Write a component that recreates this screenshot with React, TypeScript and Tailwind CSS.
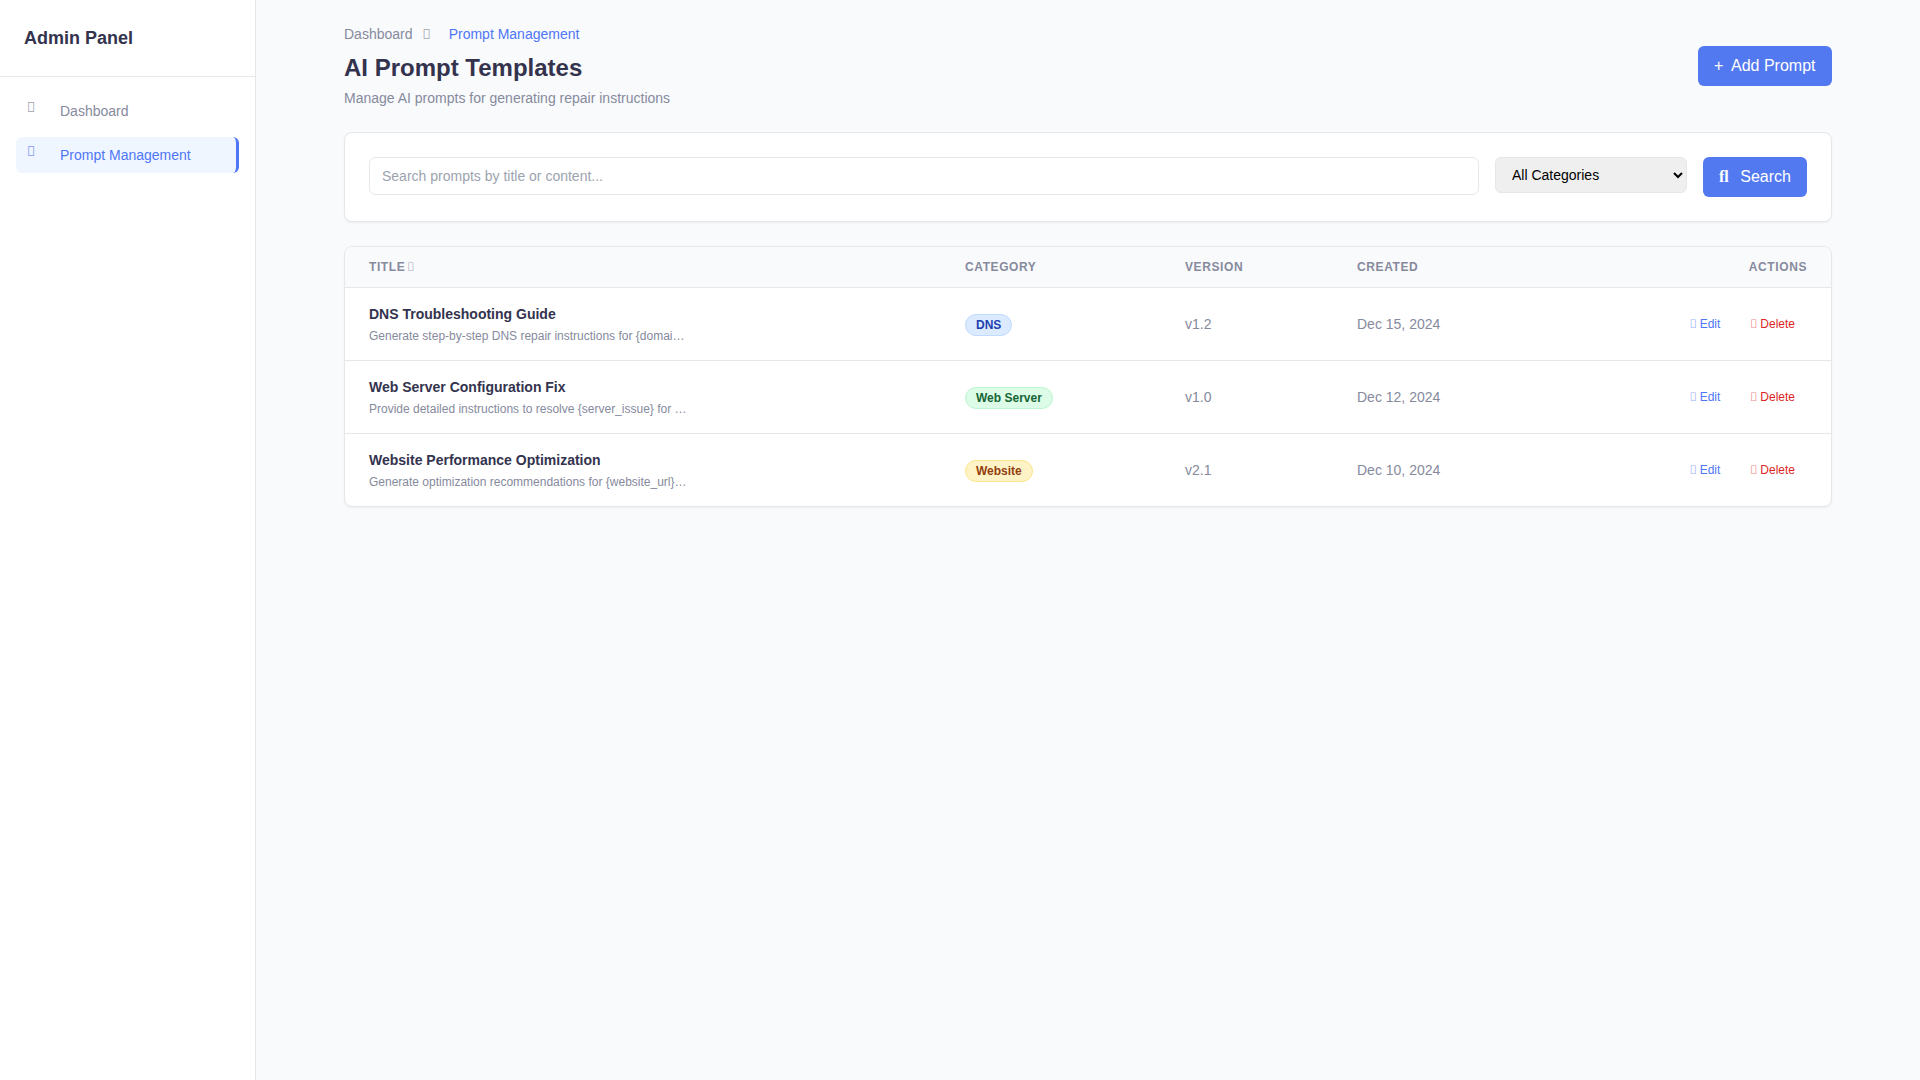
import React from "react";

function Icon({ c, className = "" }: { c: string; className?: string }) {
  return <i className={`font-sans font-black not-italic leading-none inline-block ${className}`}>{c}</i>;
}

const rows = [
  {
    title: "DNS Troubleshooting Guide",
    desc: "Generate step-by-step DNS repair instructions for {domain} with detailed verification steps",
    cat: "DNS",
    badge: "bg-[#dbeafe] border-[#bfdbfe] text-[#1e40af]",
    ver: "v1.2",
    date: "Dec 15, 2024",
  },
  {
    title: "Web Server Configuration Fix",
    desc: "Provide detailed instructions to resolve {server_issue} for {server_type} environments",
    cat: "Web Server",
    badge: "bg-[#dcfce7] border-[#bbf7d0] text-[#166534]",
    ver: "v1.0",
    date: "Dec 12, 2024",
  },
  {
    title: "Website Performance Optimization",
    desc: "Generate optimization recommendations for {website_url} based on performance metrics",
    cat: "Website",
    badge: "bg-[#fef3c7] border-[#fde68a] text-[#92400e]",
    ver: "v2.1",
    date: "Dec 10, 2024",
  },
];

export default function App() {
  return (
    <div className="flex min-h-screen bg-[#f9fafc] font-['Liberation_Sans',Arial,sans-serif] text-[#33334e]">
      <aside className="w-64 shrink-0 bg-white border-r border-[#e5e7eb]">
        <div className="p-6 border-b border-[#e5e7eb]">
          <h1 className="text-lg leading-7 font-bold">Admin Panel</h1>
        </div>
        <nav className="p-4 pr-0 flex flex-col gap-2 text-sm">
          <a className="flex w-[223px] px-3 py-2 rounded-md text-[#868a9d] border-r-[3px] border-transparent">
            <Icon c={"\uf015"} className="w-5 -ml-px -mt-px mr-[13px] text-[#9ca3af]" />
            Dashboard
          </a>
          <a className="flex w-[223px] px-3 py-2 rounded-md bg-[#eff6ff] text-[#4f76f6] border-r-[3px] border-[#4f76f6]">
            <Icon c={"\uf544"} className="w-5 -ml-px -mt-px mr-[13px] text-[#7f9bf7]" />
            Prompt Management
          </a>
        </nav>
      </aside>
      <main className="flex-1 px-[88px] py-6">
        <div className="flex items-center justify-between mb-6">
          <div>
            <div className="flex items-center text-sm text-[#868a9d] mb-2">
              <span>Dashboard</span>
              <Icon c={"\uf054"} className="ml-2.5 mr-[18px] text-[#a3a7b5]" />
              <span className="text-[#4f76f6]">Prompt Management</span>
            </div>
            <h2 className="text-2xl font-bold mb-1">AI Prompt Templates</h2>
            <p className="text-sm text-[#868a9d]">Manage AI prompts for generating repair instructions</p>
          </div>
          <button className="w-[134px] h-10 px-4 rounded-md bg-[#5379f0] text-white text-base flex items-center">
            <span className="mr-2 w-[9px] text-center">+</span>
            Add Prompt
          </button>
        </div>

        <div className="bg-white border border-[#e5e7eb] rounded-lg shadow-[0_1px_2px_rgba(0,0,0,0.05)] p-6 flex items-start gap-4 mb-6">
          <input
            className="flex-1 min-w-0 bg-white border border-[#e5e7eb] rounded-md px-3 py-2 text-sm outline-none placeholder:text-[#9ca3af]"
            placeholder="Search prompts by title or content..."
          />
          <select className="w-48 h-9 pl-3 pr-4 text-sm text-black bg-[#efefef] border border-[#e5e7eb] rounded-md">
            <option>All Categories</option>
          </select>
          <button className="w-[104px] h-10 px-4 rounded-md bg-[#5379f0] text-white text-base flex items-center whitespace-pre">
            <span className="font-['Liberation_Serif',serif] font-bold mr-[7px]">fl</span>
            {" Search"}
          </button>
        </div>

        <div className="bg-white border border-[#e5e7eb] rounded-lg shadow-[0_1px_2px_rgba(0,0,0,0.05)] overflow-hidden">
          <table className="w-full table-fixed border-collapse">
            <colgroup>
              <col className="w-[596px]" />
              <col className="w-[220px]" />
              <col className="w-[172px]" />
              <col className="w-[249px]" />
              <col className="w-[249px]" />
            </colgroup>
            <thead className="bg-[#f9fafc]">
              <tr className="border-b border-[#e5e7eb] text-xs font-bold uppercase tracking-wider text-[#868a9d] text-left h-10">
                <th className="pl-6 font-bold">
                  Title <Icon c={"\uf0dc"} className="-ml-0.5 text-xs text-[#b0b3c0]" />
                </th>
                <th className="pl-6 font-bold">Category</th>
                <th className="pl-6 font-bold">Version</th>
                <th className="pl-6 font-bold">Created</th>
                <th className="pr-6 font-bold text-right">Actions</th>
              </tr>
            </thead>
            <tbody>
              {rows.map((r, i) => (
                <tr key={r.title} className={`h-[72px] ${i < 2 ? "border-b border-[#e5e7eb]" : ""}`}>
                  <td className="pl-6 py-4 align-middle">
                    <div className="text-sm font-bold">{r.title}</div>
                    <div className="mt-1 text-xs text-[#868a9d] truncate max-w-xs">{r.desc}</div>
                  </td>
                  <td className="pl-6 text-sm align-middle">
                    <span className={`inline-block mt-0.5 border rounded-full px-2.5 py-0.5 text-xs font-bold ${r.badge}`}>
                      {r.cat}
                    </span>
                  </td>
                  <td className="pl-6 text-sm text-[#868a9d] align-middle">{r.ver}</td>
                  <td className="pl-6 text-sm text-[#868a9d] align-middle">{r.date}</td>
                  <td className="pr-6 align-middle">
                    <div className="flex justify-end gap-1.5 text-xs">
                      <button className="px-3 text-[#4f76f6] flex items-center">
                        <Icon c={"\uf044"} className="mr-[3px] text-[#9bb2fa]" />
                        Edit
                      </button>
                      <button className="px-3 text-[#dc2626] flex items-center">
                        <Icon c={"\uf2ed"} className="mr-[3px] text-[#ee8b8b]" />
                        Delete
                      </button>
                    </div>
                  </td>
                </tr>
              ))}
            </tbody>
          </table>
        </div>
      </main>
    </div>
  );
}
